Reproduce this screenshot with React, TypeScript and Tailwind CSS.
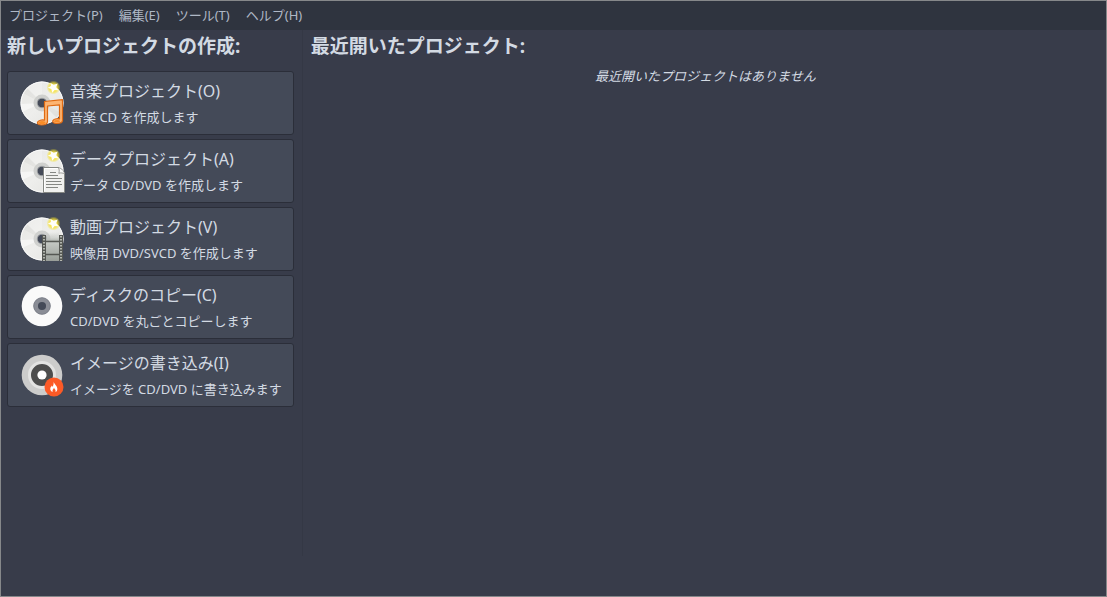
import type { ReactNode } from "react";

const menus = ["プロジェクト(P)", "編集(E)", "ツール(T)", "ヘルプ(H)"];

function Icon({ children }: { children: ReactNode }) {
  return (
    <svg aria-hidden="true" viewBox="0 0 48 48" className="size-12 shrink-0">
      {children}
    </svg>
  );
}

function NewDisc() {
  return (
    <>
      <defs>
        <linearGradient id="disc" x1="0" y1="0" x2="1" y2="1">
          <stop offset="0" stopColor="#e6e6e3" />
          <stop offset="0.5" stopColor="#eeeeec" />
          <stop offset="1" stopColor="#e2e2df" />
        </linearGradient>
        <radialGradient id="glow">
          <stop offset="0.3" stopColor="#fdeb3c" />
          <stop offset="0.65" stopColor="#f8e032" stopOpacity="0.7" />
          <stop offset="1" stopColor="#f5e61e" stopOpacity="0" />
        </radialGradient>
      </defs>
      <circle cx="24" cy="24" r="21.5" fill="url(#disc)" />
      <path d="M24 24 9 9 18 3.500 24 2.500ZM24 24 39 39 30 44.500 24 45.500Z" fill="#fff" opacity="0.25" />
      <path d="M24 24 2.500 25 4 33ZM24 24 45 20 45 26Z" fill="#fff" opacity="0.5" />
      <path d="M24 24 5 14 9 9ZM24 24 43 34 39 39Z" fill="#cfcfca" opacity="0.25" />
      <circle cx="24" cy="24" r="21" fill="none" stroke="#fafafa" strokeWidth="1" />
      <circle cx="24" cy="24" r="8.500" fill="#cfd0ce" />
      <circle cx="24" cy="24" r="4.800" fill="#444a58" stroke="#a7a9ab" strokeWidth="0.8" />
      <circle cx="35.500" cy="8.500" r="7" fill="url(#glow)" />
      <path d="m32.500 4 3.200 1.800 4-1.300-1.500 3.700 2.300 3-3.800-.2-2.500 2.800-.9-3.700-3.500-1.300 3.200-1.700Z" fill="#fffef8" />
    </>
  );
}

function MusicIcon() {
  return (
    <Icon>
      <NewDisc />
      <path
        d="M26.500 22.500 44.500 20.700V41.500C44.500 43.500 41.500 44.500 38.500 44.500 36 44.500 34.500 43.500 34.700 42 35.300 40.200 38.500 39.300 41.500 39.800V25.800L29.500 27V42.500C29.500 45 26.500 46 23.500 46 20.800 46 19 45 19.500 43.200 20.300 41.200 24 40.600 26.500 41.200Z"
        fill="#fcb472"
        stroke="#df6a12"
        strokeWidth="1.200"
        strokeLinejoin="round"
      />
      <ellipse cx="24" cy="43.500" rx="3.500" ry="1.500" fill="#f98d28" />
      <ellipse cx="39" cy="42.200" rx="3" ry="1.300" fill="#f98d28" />
    </Icon>
  );
}

function DocumentIcon() {
  return (
    <Icon>
      <NewDisc />
      <path d="M25.500 20.500H40.500L46.500 26.500V45.500H25.500Z" fill="#f1f1ef" stroke="#858783" />
      <path d="M26.500 44.500V21.500H40" fill="none" stroke="#fff" />
      <path d="M40 20.500C41.500 22 41.500 24 40.800 26.300 43 25.500 45 26 46.500 27L46.500 26C45 22.500 43 21 40 20.500Z" fill="#fafafa" stroke="#858783" strokeWidth="0.8" />
      <path d="M32 25.500H38M28 28.500H40M28 31.500H44M28 34.500H43M28 37.500H44M28 40.500H40" stroke="#858783" />
    </Icon>
  );
}

function FilmIcon() {
  return (
    <Icon>
      <NewDisc />
      <defs>
        <linearGradient id="film" x1="0" y1="0" x2="0" y2="1">
          <stop offset="0" stopColor="#c8cbc7" />
          <stop offset="1" stopColor="#999e98" />
        </linearGradient>
        <linearGradient id="fade" x1="0" y1="0" x2="0" y2="1">
          <stop offset="0" stopColor="#c8cbc7" stopOpacity="0" />
          <stop offset="1" stopColor="#b3b7b2" />
        </linearGradient>
      </defs>
      <path d="M28 17H41V26H28Z" fill="url(#fade)" />
      <path d="M28 26H41V46H28Z" fill="url(#film)" />
      <path d="M24 20H28V46H24ZM41 20H45V46H41Z" fill="#555753" />
      <path d="M26 21V46M43 21V46" stroke="#d3d7cf" strokeWidth="1.500" strokeDasharray="1.500 1.500" />
      <path d="M28 26.500H41M28 39.500H41" stroke="#555753" strokeWidth="1.300" />
    </Icon>
  );
}

function CopyIcon() {
  return (
    <Icon>
      <circle cx="24" cy="23" r="20.300" fill="#fafafa" />
      <circle cx="24" cy="23" r="6.300" fill="#444a58" stroke="#8a8d96" strokeWidth="4.500" />
      <circle cx="24" cy="23" r="8.300" fill="none" stroke="#777b85" strokeWidth="0.8" />
    </Icon>
  );
}

function BurnIcon() {
  return (
    <Icon>
      <circle cx="24" cy="24" r="20.300" fill="#cccccb" />
      <circle cx="24" cy="24" r="12.500" fill="#4d4d4d" stroke="#e3e3e2" strokeWidth="3" />
      <circle cx="24" cy="24" r="4.600" fill="#fff" />
      <circle cx="36" cy="36" r="9.500" fill="#fc5a26" />
      <path
        d="M35.500 30.500C36 33 39.800 35 39.300 38.500 39.100 40 38.300 40.700 37.500 41 38 39 36.500 38 36 36.800 35.200 38.500 34 39.300 34.700 41 33 40.500 32 39 32.300 37.300 32.600 35.700 33.500 35.500 33.800 34.500 34.300 35 34.400 35.400 34.500 36 35.800 34 35.700 32 35.500 30.500Z"
        fill="#fff"
      />
    </Icon>
  );
}

const projects = [
  { title: "音楽プロジェクト(O)", description: "音楽 CD を作成します", icon: <MusicIcon /> },
  { title: "データプロジェクト(A)", description: "データ CD/DVD を作成します", icon: <DocumentIcon /> },
  { title: "動画プロジェクト(V)", description: "映像用 DVD/SVCD を作成します", icon: <FilmIcon /> },
  { title: "ディスクのコピー(C)", description: "CD/DVD を丸ごとコピーします", icon: <CopyIcon /> },
  { title: "イメージの書き込み(I)", description: "イメージを CD/DVD に書き込みます", icon: <BurnIcon /> },
];

export default function App() {
  return (
    <div className="flex min-h-screen flex-col border border-[#86888a] bg-[#383c4a] font-['Noto_Sans','Noto_Sans_CJK_JP',sans-serif] text-[13px] text-[#d3dae3]">
      <nav className="flex h-[29px] shrink-0 items-center bg-[#2f343f] pb-0.5 text-[#afb8c6]">
        {menus.map((menu) => (
          <button key={menu} type="button" className="px-2 leading-5 whitespace-nowrap">
            {menu}
          </button>
        ))}
      </nav>
      <main className="flex grow pb-10">
        <section className="shrink-0 border-r border-[#343845] pt-0.5 pr-2 pl-1.5">
          <h2 className="text-[19px] leading-7 font-bold whitespace-nowrap">新しいプロジェクトの作成:</h2>
          <div className="mt-[11px] flex flex-col gap-1">
            {projects.map(({ title, description, icon }) => (
              <button
                key={title}
                type="button"
                className="flex h-16 items-center gap-1 rounded-[3px] border border-[#2b2e39] bg-[#444a58] pr-[11px] pl-2.5 text-left whitespace-nowrap"
              >
                {icon}
                <span className="flex flex-col gap-1">
                  <span className="text-base leading-6">{title}</span>
                  <span className="leading-5">{description}</span>
                </span>
              </button>
            ))}
          </div>
        </section>
        <section className="grow pt-0.5 pr-1.5 pl-2">
          <h2 className="text-[19px] leading-7 font-bold">最近開いたプロジェクト:</h2>
          <p className="mt-1.5 text-center leading-5 italic">最近開いたプロジェクトはありません</p>
        </section>
      </main>
    </div>
  );
}
